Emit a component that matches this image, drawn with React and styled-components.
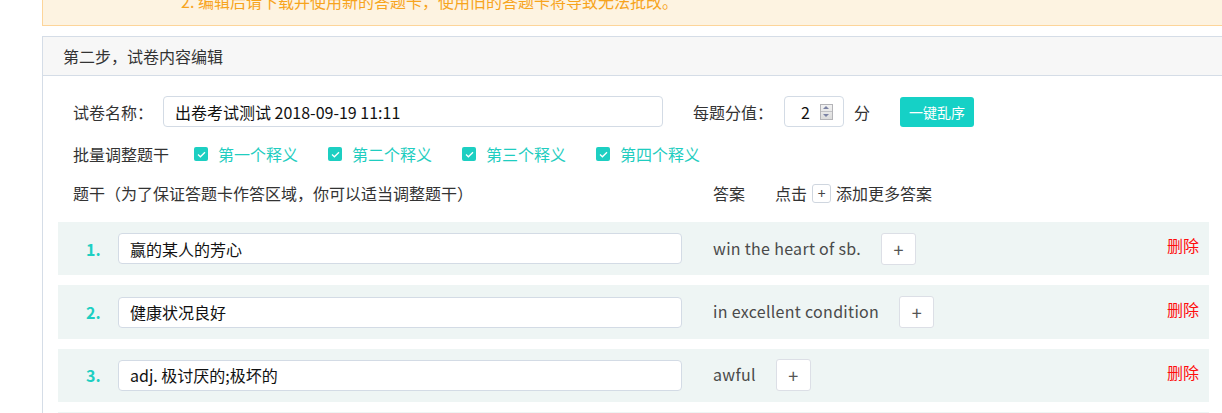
import React from "react";
import styled, { createGlobalStyle } from "styled-components";

const GlobalStyle = createGlobalStyle`
  html, body {
    margin: 0;
    padding: 0;
    background: #fff;
    overflow: hidden;
  }
  body {
    font-family: "Noto Sans CJK SC", "Noto Sans", sans-serif;
    color: #333;
  }
  * { box-sizing: border-box; }
`;

const Page = styled.div`
  padding-left: 42px;
  width: 1230px;
`;

const Notice = styled.div`
  margin-top: -46px;
  width: 1183px;
  background: #fdf3e1;
  border: 1px solid #fdd59a;
  padding: 10px 0 12px 138px;
  color: #f7a41d;
  font-size: 16px;
  line-height: 24px;
`;

const NoticeLine = styled.div`
  white-space: nowrap;
`;

const Panel = styled.section`
  margin-top: 10px;
  width: 1183px;
  border: 1px solid #d5dde7;
  border-bottom: none;
  min-height: 400px;
`;

const PanelHeader = styled.header`
  height: 39px;
  line-height: 38px;
  padding: 0 20px;
  background: #f7f7f7;
  border-bottom: 1px solid #d5dde7;
  font-size: 16px;
  color: #333;
`;

const PanelBody = styled.div`
  padding: 20px 15px 0;
`;

const FormRow = styled.div`
  display: flex;
  align-items: center;
  padding-left: 15px;
  margin-bottom: ${(p) => p.$mb ?? 15}px;
  font-size: 16px;
  line-height: 24px;
  color: #333;
  white-space: nowrap;
`;

const Label = styled.span`
  width: ${(p) => (p.$w ? `${p.$w}px` : "auto")};
  margin-left: ${(p) => p.$ml || 0}px;
  flex-shrink: 0;
`;

const TextBox = styled.div`
  width: ${(p) => p.$w}px;
  height: 31px;
  border: 1px solid #d3dbe5;
  border-radius: 4px;
  background: #fff;
  padding-left: 11px;
  display: flex;
  align-items: center;
  font-size: 16px;
  color: #111;
  flex-shrink: 0;
`;

const NumberBox = styled.div`
  width: 60px;
  height: 31px;
  border: 1px solid #d3dbe5;
  border-radius: 4px;
  background: #fff;
  display: flex;
  align-items: center;
  padding-left: 16px;
  font-size: 16px;
  color: #111;
  gap: 10px;
`;

const Spinner = styled.div`
  width: 13px;
  height: 16px;
  border: 1px solid #b4b4b8;
  background: linear-gradient(#f2f2f2, #dcdcdc);
  display: flex;
  flex-direction: column;
`;

const SpinHalf = styled.div`
  flex: 1;
  display: flex;
  align-items: center;
  justify-content: center;
  border-top: ${(p) => (p.$down ? "1px solid #c2c2c6" : "none")};
  &::after {
    content: "";
    border-left: 3px solid transparent;
    border-right: 3px solid transparent;
    ${(p) =>
      p.$down
        ? "border-top: 3px solid #7b82a4;"
        : "border-bottom: 3px solid #7b82a4;"}
  }
`;

const TealButton = styled.button`
  margin-left: 30px;
  width: 74px;
  height: 30px;
  border: none;
  border-radius: 3px;
  background: #15d1c6;
  color: #fff;
  font-family: inherit;
  font-size: 14px;
  padding: 0;
`;

const CheckItem = styled.label`
  display: flex;
  align-items: center;
  margin-left: ${(p) => p.$ml}px;
  color: #1fcdc0;
`;

const CheckBox = styled.span`
  width: 14px;
  height: 14px;
  border-radius: 2px;
  background: #1dcfc2;
  margin-right: 10px;
  display: flex;
  align-items: center;
  justify-content: center;
`;

const MiniPlus = styled.span`
  width: 19px;
  height: 19px;
  border: 1px solid #cfd6df;
  border-radius: 3px;
  margin: 0 5px;
  display: inline-flex;
  align-items: center;
  justify-content: center;
  font-size: 14px;
  line-height: 1;
  color: #444;
`;

const List = styled.div`
  display: flex;
  flex-direction: column;
  gap: 10px;
  margin-top: 17px;
`;

const Item = styled.div`
  height: 53.4px;
  background: #eef5f4;
  display: flex;
  align-items: center;
  padding-right: 10px;
  flex-shrink: 0;
`;

const Num = styled.span`
  width: 60px;
  padding-left: 28px;
  color: #1dcfc2;
  font-weight: bold;
  font-size: 16px;
  flex-shrink: 0;
`;

const Answer = styled.span`
  margin-left: 31px;
  font-size: 16px;
  letter-spacing: 0.3px;
  color: #4a4a4a;
  margin-bottom: 2px;
  white-space: nowrap;
`;

const PlusButton = styled.button`
  margin-left: 20px;
  width: 35px;
  height: 32px;
  background: #fff;
  border: 1px solid #dcdfe6;
  border-radius: 3px;
  color: #555;
  font-size: 18px;
  font-family: inherit;
  padding: 0;
  display: flex;
  align-items: center;
  justify-content: center;
`;

const Delete = styled.a`
  margin-left: auto;
  margin-bottom: 7px;
  color: #ff0d0d;
  font-size: 16px;
  cursor: pointer;
`;

const Check = () => (
  <svg width="9" height="7" viewBox="0 0 9 7">
    <path d="M1 3.6 L3.4 5.8 L8 1.2" fill="none" stroke="#fff" strokeWidth="1.3" />
  </svg>
);

const options = [
  { text: "第一个释义", ml: 25 },
  { text: "第二个释义", ml: 30 },
  { text: "第三个释义", ml: 30 },
  { text: "第四个释义", ml: 30 },
];

const items = [
  { q: "赢的某人的芳心", a: "win the heart of sb." },
  { q: "健康状况良好", a: "in excellent condition" },
  { q: "adj. 极讨厌的;极坏的", a: "awful" },
];

export default function App() {
  return (
    <>
      <GlobalStyle />
      <Page>
        <Notice>
          <NoticeLine>1. 试卷内容编辑后，需要重新下载答题卡。</NoticeLine>
          <NoticeLine>2. 编辑后请下载并使用新的答题卡，使用旧的答题卡将导致无法批改。</NoticeLine>
        </Notice>
        <Panel>
          <PanelHeader>第二步，试卷内容编辑</PanelHeader>
          <PanelBody>
            <FormRow>
              <Label $w={90}>试卷名称：</Label>
              <TextBox $w={500}>出卷考试测试 2018-09-19 11:11</TextBox>
              <Label $w={91} $ml={30}>每题分值：</Label>
              <NumberBox>
                <span>2</span>
                <Spinner>
                  <SpinHalf />
                  <SpinHalf $down />
                </Spinner>
              </NumberBox>
              <Label $ml={10}>分</Label>
              <TealButton>一键乱序</TealButton>
            </FormRow>
            <FormRow>
              <Label>批量调整题干</Label>
              {options.map((o) => (
                <CheckItem key={o.text} $ml={o.ml}>
                  <CheckBox>
                    <Check />
                  </CheckBox>
                  {o.text}
                </CheckItem>
              ))}
            </FormRow>
            <FormRow $mb={0}>
              <Label $w={640}>题干（为了保证答题卡作答区域，你可以适当调整题干）</Label>
              <Label $w={62}>答案</Label>
              <Label>点击</Label>
              <MiniPlus>+</MiniPlus>
              <Label>添加更多答案</Label>
            </FormRow>
            <List>
              {items.map((it, i) => (
                <Item key={i}>
                  <Num>{i + 1}.</Num>
                  <TextBox $w={564}>{it.q}</TextBox>
                  <Answer>{it.a}</Answer>
                  <PlusButton>+</PlusButton>
                  <Delete>删除</Delete>
                </Item>
              ))}
              <Item />
            </List>
          </PanelBody>
        </Panel>
      </Page>
    </>
  );
}
